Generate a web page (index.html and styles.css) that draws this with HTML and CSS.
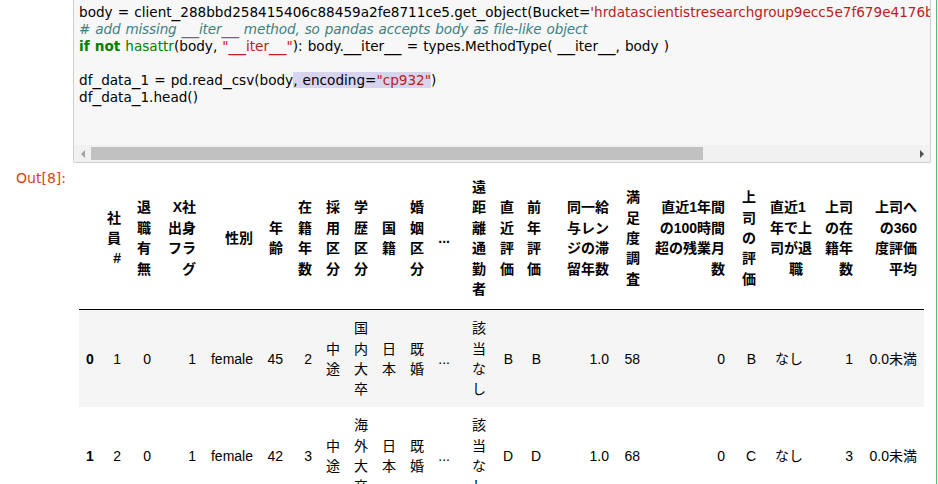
FILE: index.html
```html
<!DOCTYPE html>
<html lang="ja">
<head>
<meta charset="utf-8">
<title>df_data_1.head()</title>
<link rel="stylesheet" href="styles.css">
</head>
<body>
<div class="cell">
  <div class="input">
    <div class="editor">
<pre class="code">body = client<span class="us">_</span>288bbd258415406c88459a2fe8711ce5.get<span class="us">_</span>object(Bucket=<span class="st">'hrdatascientistresearchgroup9ecc5e7f679e4176bc7b4a2d61bd'</span>,Key=<span class="st">'data.csv'</span>)[<span class="st">'Body'</span>]
<span class="cm"># add missing <span class="us">__</span>iter<span class="us">__</span> method, so pandas accepts body as file-like object</span>
<span class="kw">if</span> <span class="kw">not</span> <span class="bi">hasattr</span>(body, <span class="st">"<span class="us">__</span>iter<span class="us">__</span>"</span>): body.<span class="us">__</span>iter<span class="us">__</span> = types.MethodType( <span class="us">__</span>iter<span class="us">__</span>, body )

df<span class="us">_</span>data<span class="us">_</span>1 = pd.read<span class="us">_</span>csv(body<span class="sel">, encoding=<span class="st">"cp932"</span></span>)
df<span class="us">_</span>data<span class="us">_</span>1.head()
</pre>
      <div class="scrollbar">
        <div class="arrow arrow-left"></div>
        <div class="track"><div class="thumb"></div></div>
        <div class="arrow arrow-right"></div>
      </div>
    </div>
  </div>

  <div class="output">
    <div class="prompt">Out[8]:</div>
    <div class="out-area">
      <table class="df">
        <colgroup>
          <col class="w21"><col class="w28"><col class="w30"><col class="w45"><col class="w57"><col class="w30"><col class="w29"><col class="w28"><col class="w28"><col class="w28"><col class="w28"><col class="w26"><col class="w36"><col class="w27"><col class="w28"><col class="w68"><col class="w31"><col class="w85"><col class="w31"><col class="w47"><col class="w50"><col class="w64">
        </colgroup>
        <thead>
          <tr>
            <th></th>
            <th>社<br>員<br>#</th>
            <th>退<br>職<br>有<br>無</th>
            <th>X社<br>出身<br>フラ<br>グ</th>
            <th>性別</th>
            <th>年<br>齢</th>
            <th>在<br>籍<br>年<br>数</th>
            <th>採<br>用<br>区<br>分</th>
            <th>学<br>歴<br>区<br>分</th>
            <th>国<br>籍</th>
            <th>婚<br>姻<br>区<br>分</th>
            <th>...</th>
            <th>遠<br>距<br>離<br>通<br>勤<br>者</th>
            <th>直<br>近<br>評<br>価</th>
            <th>前<br>年<br>評<br>価</th>
            <th>同一給<br>与レン<br>ジの滞<br>留年数</th>
            <th>満<br>足<br>度<br>調<br>査</th>
            <th>直近1年間<br>の100時間<br>超の残業月<br>数</th>
            <th>上<br>司<br>の<br>評<br>価</th>
            <th>直近1<br>年で上<br>司が退<br>職</th>
            <th>上司<br>の在<br>籍年<br>数</th>
            <th>上司へ<br>の360<br>度評価<br>平均</th>
          </tr>
        </thead>
        <tbody>
          <tr>
            <th>0</th>
            <td>1</td><td>0</td><td>1</td><td>female</td><td>45</td><td>2</td>
            <td>中途</td><td>国内大卒</td><td>日本</td><td>既婚</td><td>...</td>
            <td>該当なし</td><td>B</td><td>B</td><td>1.0</td><td>58</td><td>0</td>
            <td>B</td><td>なし</td><td>1</td><td>0.0未満</td>
          </tr>
          <tr>
            <th>1</th>
            <td>2</td><td>0</td><td>1</td><td>female</td><td>42</td><td>3</td>
            <td>中途</td><td>海外大卒</td><td>日本</td><td>既婚</td><td>...</td>
            <td>該当なし</td><td>D</td><td>D</td><td>1.0</td><td>68</td><td>0</td>
            <td>C</td><td>なし</td><td>3</td><td>0.0未満</td>
          </tr>
        </tbody>
      </table>
    </div>
  </div>
</div>
</body>
</html>
```
FILE: styles.css
```css
* {
  box-sizing: border-box;
}

html,
body {
  margin: 0;
  padding: 0;
  background: #fff;
}

body {
  width: 938px;
  height: 484px;
  overflow: hidden;
}

.cell {
  width: 937px;
  height: 484px;
  border-right: 1px solid #66bb6a;
  overflow: hidden;
}

/* ---------- input cell ---------- */
.input {
  padding-left: 73px;
}

.editor {
  width: 858px;
  background: #f7f7f7;
  border: 1px solid #cfcfcf;
  border-top: none;
  border-radius: 0 0 2px 2px;
}

.code {
  margin: 0;
  height: 145px;
  padding: 4px 0 0 5px;
  font-family: "DejaVu Sans", sans-serif;
  font-size: 13.6px;
  word-spacing: 0.8px;
  line-height: 17px;
  color: #000;
  white-space: pre;
  overflow: hidden;
}

/* the original editor font draws a wide underscore */
.us {
  font-size: 17.4px;
  line-height: 0;
  word-spacing: 0;
  letter-spacing: 0;
}

.kw {
  color: #008000;
  font-weight: bold;
}

.bi {
  color: #008000;
}

.st {
  color: #ba2121;
}

.cm {
  color: #408080;
  font-style: italic;
  letter-spacing: -0.14px;
}

.sel {
  background: #d7d4f0;
}

.scrollbar {
  display: flex;
  height: 17px;
  background: #f1f1f1;
}

.arrow {
  width: 17px;
  height: 17px;
  flex: none;
  display: flex;
  align-items: center;
  justify-content: center;
}

.arrow-left::before {
  content: "";
  border-top: 4px solid transparent;
  border-bottom: 4px solid transparent;
  border-right: 4px solid #a3a3a3;
}

.arrow-right::before {
  content: "";
  border-top: 4px solid transparent;
  border-bottom: 4px solid transparent;
  border-left: 4px solid #505050;
}

.track {
  flex: 1;
  padding: 2px 0;
}

.thumb {
  width: 612px;
  height: 13px;
  background: #c1c1c1;
}

/* ---------- output ---------- */
.output {
  display: flex;
  align-items: flex-start;
}

.prompt {
  width: 73px;
  flex: none;
  padding: 6.5px 7px 0 0;
  text-align: right;
  font-family: "DejaVu Sans", sans-serif;
  font-size: 14px;
  line-height: 17px;
  color: #d84315;
  white-space: nowrap;
}

.out-area {
  padding: 5px 0 0 6px;
}

.df {
  border-collapse: collapse;
  table-layout: fixed;
  width: 845px;
  font-family: "Liberation Sans", "Noto Sans CJK JP", sans-serif;
  font-size: 14px;
  line-height: 20.4px;
  color: #000;
}

.df th,
.df td {
  padding: 7.7px 7px;
  text-align: right;
  vertical-align: middle;
  font-weight: normal;
}

.df th {
  font-weight: bold;
}

.df thead th {
  padding: 9px 7px 10px;
  white-space: nowrap;
  border-bottom: 1px solid #000;
}

.df tbody tr:nth-child(odd) {
  background: #f5f5f5;
}

.w21 { width: 21px; }
.w26 { width: 26px; }
.w27 { width: 27px; }
.w28 { width: 28px; }
.w29 { width: 29px; }
.w30 { width: 30px; }
.w31 { width: 31px; }
.w36 { width: 36px; }
.w45 { width: 45px; }
.w47 { width: 47px; }
.w50 { width: 50px; }
.w57 { width: 57px; }
.w64 { width: 64px; }
.w68 { width: 68px; }
.w85 { width: 85px; }
```
